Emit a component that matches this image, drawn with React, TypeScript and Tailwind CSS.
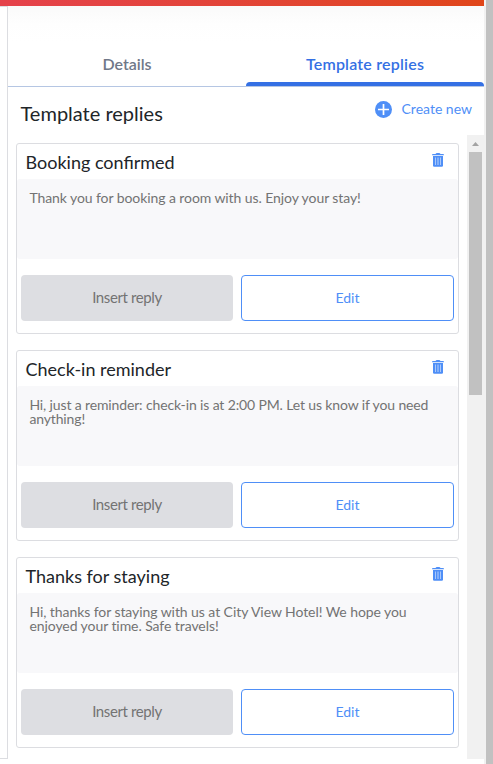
const replies = [
  {
    title: 'Booking confirmed',
    text: 'Thank you for booking a room with us. Enjoy your stay!',
    tracking: 'tracking-[-0.08px]',
  },
  {
    title: 'Check-in reminder',
    text: 'Hi, just a reminder: check-in is at 2:00 PM. Let us know if you need anything!',
    tracking: 'tracking-[-0.135px]',
  },
  {
    title: 'Thanks for staying',
    text: 'Hi, thanks for staying with us at City View Hotel! We hope you enjoyed your time. Safe travels!',
    tracking: 'tracking-[-0.07px]',
  },
];

function TrashIcon() {
  return (
    <svg width="12" height="14" viewBox="0 0 12 14" className="block" fill="#4f8ff7">
      <path d="M0.4 1H3.5Q4 0 5 0h2Q8 0 8.5 1h3.1L12 2.3H0z" />
      <path d="M1 3h10V12.6a1.2 1.2 0 0 1-1.2 1.2H2.2A1.2 1.2 0 0 1 1 12.6z" />
      <path d="M3 4.5h1v7.5H3zM5.4 4.5h1.2v7.5H5.4zM8 4.5h1v7.5H8z" fill="#a9c8fb" />
    </svg>
  );
}

function PlusCircleIcon() {
  return (
    <svg width="17" height="17" viewBox="0 0 17 17" className="block">
      <circle cx="8.5" cy="8.5" r="8.5" fill="#4f8ff7" />
      <path d="M8.5 3v11M3 8.5h11" stroke="#fff" strokeWidth="1.7" />
    </svg>
  );
}

function ReplyCard({ title, text, tracking }: (typeof replies)[number]) {
  return (
    <article className="h-[191px] w-[443px] shrink-0 rounded-[3px] border border-[#dcdde1]">
      <header className="flex h-[35px] items-start justify-between pr-[14px] pl-[8.5px]">
        <h2 className="pt-[6px] text-[18px] leading-[25px] text-[#212529]">{title}</h2>
        <button className="mt-[9px]" aria-label="Delete">
          <TrashIcon />
        </button>
      </header>
      <p className={`h-20 rounded-[3px] bg-[#f8f8fa] px-[12.4px] pt-[12px] text-[14px] leading-[14px] text-[#737373] ${tracking}`}>
        {text}
      </p>
      <div className="mt-4 flex gap-2 px-1 text-[14px]">
        <button className="h-[46px] w-[212px] rounded-[4px] bg-[#dddee2] pb-[2px] text-[15px] tracking-[-0.38px] text-[#737373]">Insert reply</button>
        <button className="h-[46px] w-[213px] rounded-[4px] border border-[#4f8ff7] pb-[2px] text-[#4f8ff7]">Edit</button>
      </div>
    </article>
  );
}

export default function App() {
  return (
    <div className="flex h-[764px] w-[493px] overflow-hidden bg-white font-['Lato',sans-serif]">
      <div className="flex w-[484px] flex-col">
        <div className="h-[6px] shrink-0 bg-gradient-to-r from-[#e5424b] to-[#e04619]" />
        <div className="flex flex-1">
          <aside className="h-[753px] w-[8px] shrink-0 border-t border-r border-b border-[#dcdde1]" />
          <main className="flex w-[476px] flex-col">
            <div className="h-[36px] shrink-0 bg-gradient-to-b from-[#fafafa] via-[#fefefe] to-white" />
            <nav className="flex h-[45px] shrink-0 border-b border-[#b5c6e3] text-[16px] font-semibold">
              <button className="flex h-[44px] w-[238px] items-center justify-center text-[#6f7888]">Details</button>
              <button className="relative flex h-[44px] w-[238px] items-center justify-center tracking-[0.2px] text-[#3470e4]">
                Template replies
                <span className="absolute inset-x-0 bottom-0 h-1 rounded-t-[4px] bg-[#3470e4]" />
              </button>
            </nav>
            <div className="flex h-[48px] shrink-0 items-start justify-between pr-[12px] pl-[12.5px]">
              <h1 className="pt-[13px] text-[20px] leading-[26px] text-[#212529]">Template replies</h1>
              <button className="flex items-center gap-[10px] pt-[12px] text-[14px] leading-[20px] text-[#4f8ff7]">
                <PlusCircleIcon />
                Create new
              </button>
            </div>
            <div className="flex h-[624px] shrink-0">
              <div className="flex w-[459px] flex-col gap-4 pt-2 pl-2">
                {replies.map((reply) => (
                  <ReplyCard key={reply.title} {...reply} />
                ))}
              </div>
              <div className="flex w-[17px] flex-col items-center bg-[#f1f1f1]">
                <svg width="17" height="17" viewBox="0 0 17 17" className="block shrink-0">
                  <path d="M5 11h7L8.5 7z" fill="#a3a3a3" />
                </svg>
                <div className="h-[243px] w-[13px] bg-[#c1c1c1]" />
              </div>
            </div>
          </main>
        </div>
      </div>
      <div className="flex w-[9px] bg-[#f1f1f1] pl-[2px]">
        <div className="flex-1 bg-[#c1c1c1]" />
      </div>
    </div>
  );
}
